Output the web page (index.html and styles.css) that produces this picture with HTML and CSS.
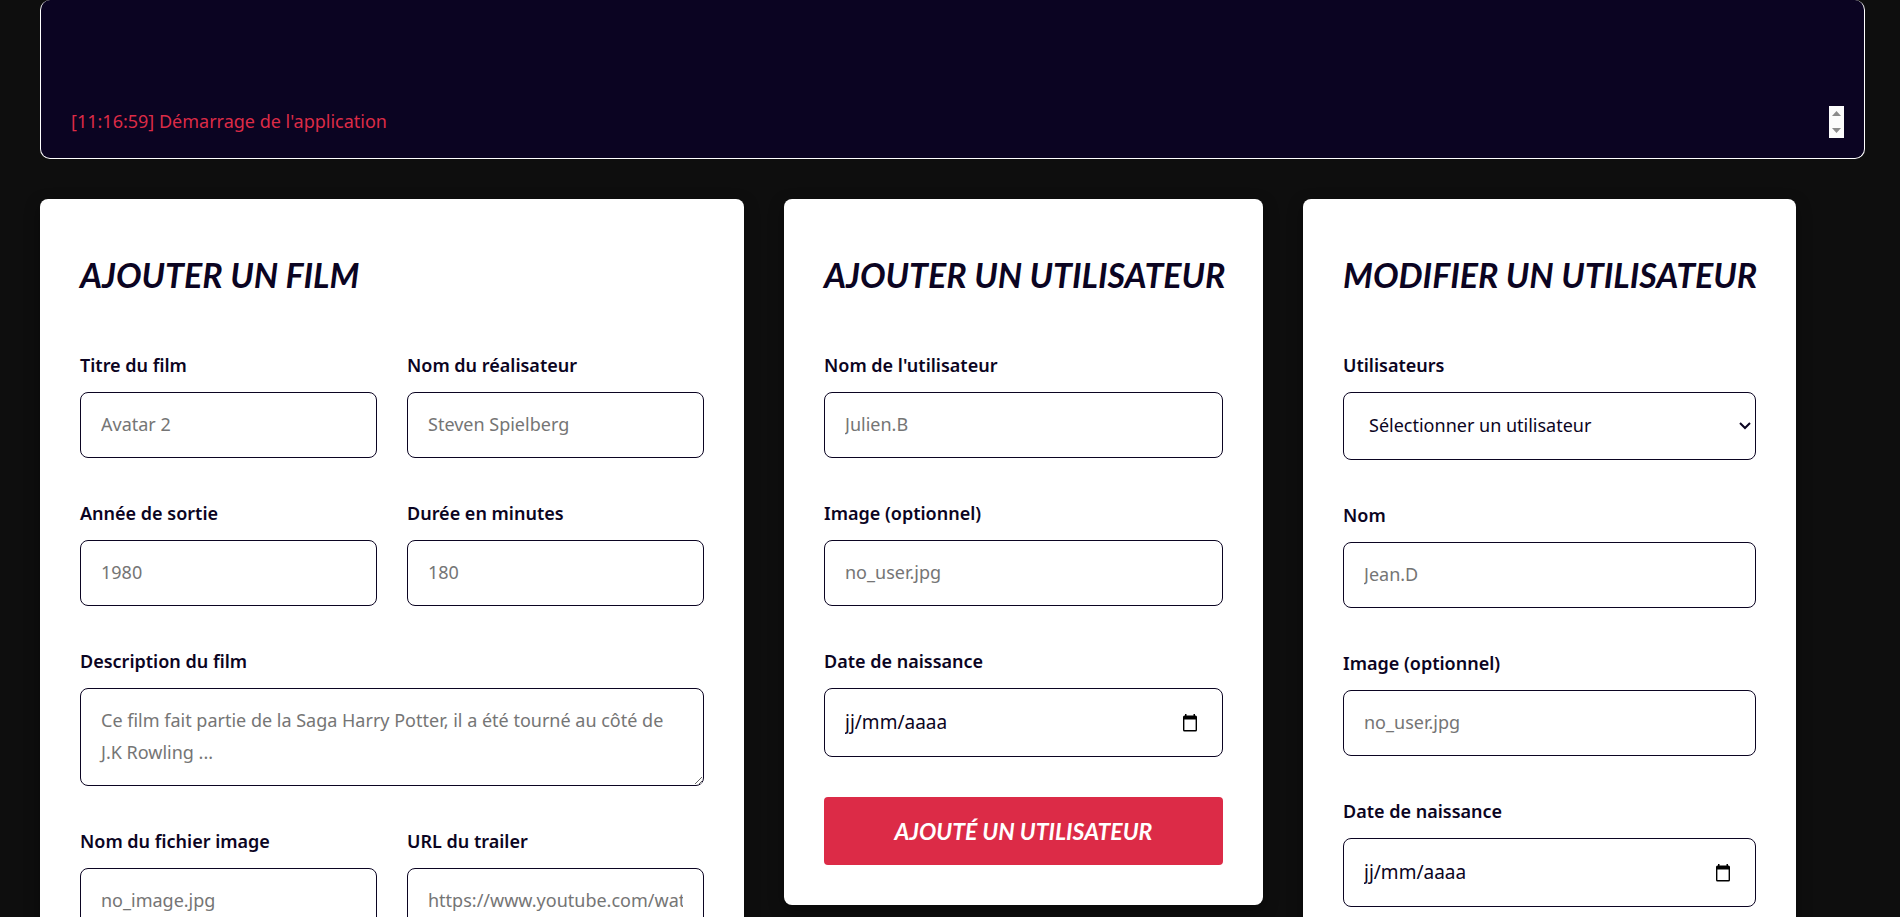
FILE: index.html
```
<!DOCTYPE html>
<html lang="fr">
<head>
  <meta charset="UTF-8">
  <meta name="viewport" content="width=device-width, initial-scale=1.0">
  <title>Administration</title>
  <link rel="stylesheet" href="styles.css">
</head>
<body>
  <main class="admin">
    <!-- Journal de l'application -->
    <section class="logs">
      <div class="logs-content">
        <p class="log">[11:16:59] Démarrage de l'application</p>
        <div class="logs-scroll">
          <svg width="9" height="5" viewBox="0 0 9 5"><path d="M0 5 4.500 0 9 5z" fill="#8b8b8b"/></svg>
          <svg width="9" height="5" viewBox="0 0 9 5"><path d="M0 0h9L4.500 5z" fill="#8b8b8b"/></svg>
        </div>
      </div>
    </section>

    <div class="cards">
      <!-- Ajouter un film -->
      <form class="card">
        <h2 class="card-title">Ajouter un film</h2>
        <div class="fields fields-double">
          <div class="field">
            <label for="film-title">Titre du film</label>
            <input type="text" id="film-title" placeholder="Avatar 2">
          </div>
          <div class="field">
            <label for="film-director">Nom du réalisateur</label>
            <input type="text" id="film-director" placeholder="Steven Spielberg">
          </div>
          <div class="field">
            <label for="film-year">Année de sortie</label>
            <input type="text" id="film-year" placeholder="1980">
          </div>
          <div class="field">
            <label for="film-duration">Durée en minutes</label>
            <input type="text" id="film-duration" placeholder="180">
          </div>
          <div class="field field-full">
            <label for="film-description">Description du film</label>
            <textarea id="film-description" rows="2" placeholder="Ce film fait partie de la Saga Harry Potter, il a été tourné au côté de J.K Rowling ..."></textarea>
          </div>
          <div class="field">
            <label for="film-image">Nom du fichier image</label>
            <input type="text" id="film-image" placeholder="no_image.jpg">
          </div>
          <div class="field">
            <label for="film-trailer">URL du trailer</label>
            <input type="text" id="film-trailer" placeholder="https://www.youtube.com/watch">
          </div>
        </div>
      </form>

      <!-- Ajouter un utilisateur -->
      <form class="card">
        <h2 class="card-title">Ajouter un utilisateur</h2>
        <div class="fields">
          <div class="field">
            <label for="user-name">Nom de l'utilisateur</label>
            <input type="text" id="user-name" placeholder="Julien.B">
          </div>
          <div class="field">
            <label for="user-image">Image (optionnel)</label>
            <input type="text" id="user-image" placeholder="no_user.jpg">
          </div>
          <div class="field">
            <label for="user-birth">Date de naissance</label>
            <div class="date">
              <input type="text" id="user-birth" placeholder="jj/mm/aaaa">
              <button type="button" class="date-button" aria-label="Choisir une date">
                <svg width="14" height="18" viewBox="0 0 14 18"><path d="M2 0h1.500v1.500h7V0H12v1.500h.5A1.500 1.500 0 0 1 14 3v13a1.500 1.500 0 0 1-1.500 1.500h-11A1.500 1.500 0 0 1 0 16V3a1.500 1.500 0 0 1 1.500-1.500H2zM1.400 5.500V16h11.200V5.500z" fill="#000" fill-rule="evenodd"/></svg>
              </button>
            </div>
          </div>
          <button type="submit" class="submit">Ajouté un utilisateur</button>
        </div>
      </form>

      <!-- Modifier un utilisateur -->
      <form class="card">
        <h2 class="card-title">Modifier un utilisateur</h2>
        <div class="fields">
          <div class="field">
            <label for="edit-user">Utilisateurs</label>
            <select id="edit-user">
              <option>Sélectionner un utilisateur</option>
            </select>
          </div>
          <div class="field">
            <label for="edit-name">Nom</label>
            <input type="text" id="edit-name" placeholder="Jean.D">
          </div>
          <div class="field">
            <label for="edit-image">Image (optionnel)</label>
            <input type="text" id="edit-image" placeholder="no_user.jpg">
          </div>
          <div class="field">
            <label for="edit-birth">Date de naissance</label>
            <div class="date">
              <input type="text" id="edit-birth" placeholder="jj/mm/aaaa">
              <button type="button" class="date-button" aria-label="Choisir une date">
                <svg width="14" height="18" viewBox="0 0 14 18"><path d="M2 0h1.500v1.500h7V0H12v1.500h.5A1.500 1.500 0 0 1 14 3v13a1.500 1.500 0 0 1-1.500 1.500h-11A1.500 1.500 0 0 1 0 16V3a1.500 1.500 0 0 1 1.500-1.500H2zM1.400 5.500V16h11.200V5.500z" fill="#000" fill-rule="evenodd"/></svg>
              </button>
            </div>
          </div>
        </div>
      </form>
    </div>
  </main>
</body>
</html>
```
FILE: styles.css
```
:root {
  --dark: #0e0e0e;
  --night: #0b0422;
  --red: #dc2b47;
  --gray: #757575;
}

* {
  box-sizing: border-box;
  margin: 0;
  padding: 0;
}

body {
  background: var(--dark);
  color: var(--night);
  font-family: "Noto Sans", sans-serif;
  font-size: 18px;
  line-height: 32px;
}

.admin {
  padding: 0 35px 40px 40px;
}

/* Journal */
.logs {
  display: flex;
  align-items: flex-end;
  min-height: 159px;
  padding: 20px;
  background: var(--night);
  border: 1px solid white;
  border-top: none;
  border-radius: 10px;
}

.logs-content {
  display: flex;
  justify-content: space-between;
  width: 100%;
}

.log {
  padding-left: 10px;
  color: var(--red);
  line-height: 30px;
}

.logs-scroll {
  display: flex;
  flex-direction: column;
  align-items: center;
  justify-content: space-between;
  width: 15px;
  height: 32px;
  padding: 5px 0;
  background: #fcfcfc;
}

/* Cartes */
.cards {
  display: grid;
  grid-template-columns: minmax(0, 704px) minmax(0, 479px) minmax(0, 493px);
  align-items: start;
  gap: 40px;
  margin-top: 40px;
}

.card {
  padding: 40px;
  background: white;
  border-radius: 8px;
  box-shadow: 0 5px 15px rgba(0, 0, 0, 0.35);
}

.card-title {
  margin-bottom: 40px;
  font-family: Lato, sans-serif;
  font-size: 34px;
  font-style: italic;
  font-weight: 700;
  line-height: 71px;
  text-transform: uppercase;
  white-space: nowrap;
}

.fields {
  display: grid;
  gap: 40px 30px;
}

.fields-double {
  grid-template-columns: 1fr 1fr;
}

.field {
  display: flex;
  flex-direction: column;
  gap: 12px;
  min-width: 0;
}

.field-full {
  grid-column: 1 / -1;
}

label {
  font-weight: 600;
  line-height: 30px;
}

input,
textarea,
select {
  display: block;
  width: 100%;
  padding: 15px 20px 17px;
  background: white;
  border: 1px solid var(--night);
  border-radius: 8px;
  color: var(--night);
  font: inherit;
}

input {
  height: 66px;
}

select {
  height: 68px;
  padding-left: 25px;
  appearance: none;
  background: white url("data:image/svg+xml,%3Csvg xmlns='http://www.w3.org/2000/svg' width='12' height='8'%3E%3Cpath d='M1 1l5 5 5-5' fill='none' stroke='%230b0422' stroke-width='2'/%3E%3C/svg%3E") no-repeat right 4px center;
}

::placeholder {
  color: var(--gray);
}

.date {
  position: relative;
}

.date input {
  height: 69px;
  padding-right: 60px;
  font-size: 19px;
}

.date input::placeholder {
  color: var(--night);
}

.date-button {
  position: absolute;
  top: 0;
  right: 26px;
  display: flex;
  align-items: center;
  height: 100%;
  background: none;
  border: none;
}

.submit {
  height: 68px;
  background: var(--red);
  border: none;
  border-radius: 4px;
  color: white;
  font-family: Lato, sans-serif;
  font-size: 23px;
  font-style: italic;
  font-weight: 700;
  text-transform: uppercase;
}
```
